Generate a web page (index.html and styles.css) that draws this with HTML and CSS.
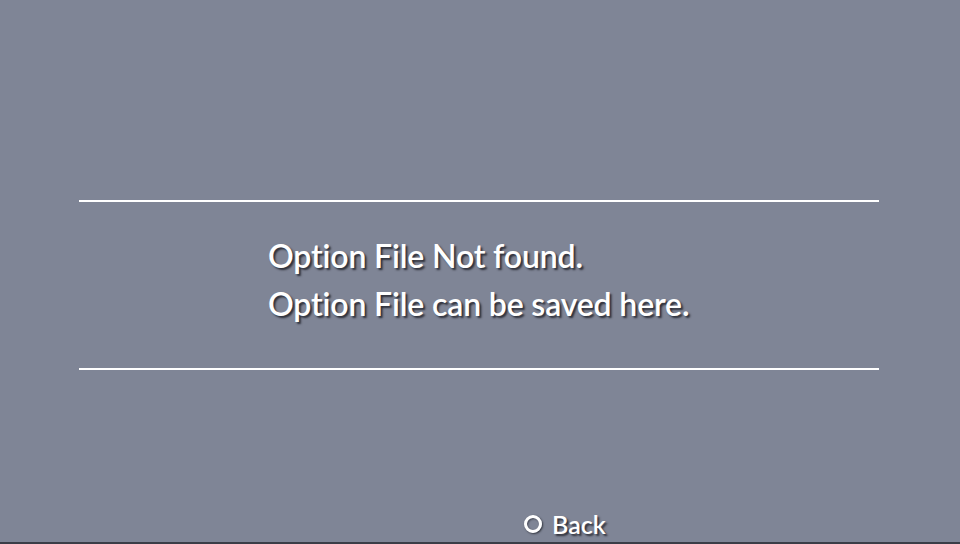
FILE: index.html
```html
<!DOCTYPE html>
<html>
<head>
<meta charset="utf-8">
<link rel="stylesheet" href="styles.css">
</head>
<body>
<div class="screen">
  <div class="panel">
    <div class="rule"></div>
    <div class="message">
      <p class="line">Option File Not found.</p>
      <p class="line">Option File can be saved here.</p>
    </div>
    <div class="rule"></div>
  </div>
  <div class="footer">
    <span class="btn-circle"></span>
    <span class="btn-label">Back</span>
  </div>
</div>
</body>
</html>
```
FILE: styles.css
```css
html, body {
  margin: 0;
  padding: 0;
}
body {
  background: #7f8596;
  font-family: "Lato", "Open Sans", sans-serif;
}
.screen {
  width: 960px;
  height: 542px;
  border-bottom: 2px solid #3a3d47;
  display: flex;
  flex-direction: column;
  overflow: hidden;
}
.panel {
  margin-top: 200px;
  padding: 0 81px 0 79px;
  display: flex;
  flex-direction: column;
}
.rule {
  height: 2px;
  background: #ffffff;
}
.message {
  height: 166px;
  padding-left: 189px;
  box-sizing: border-box;
  padding-top: 30px;
}
.line {
  margin: 0;
  color: #ffffff;
  font-size: 32px;
  font-weight: 600;
  line-height: 48px;
  letter-spacing: -0.15px;
  text-shadow: 2px 2px 2px rgba(30, 32, 40, 0.85);
}
.footer {
  margin-top: auto;
  display: flex;
  align-items: center;
  gap: 10px;
  padding-left: 524px;
  height: 36px;
}
.btn-circle {
  width: 12px;
  height: 12px;
  border: 3px solid #ffffff;
  border-radius: 50%;
  box-shadow: 1px 1px 2px rgba(30, 32, 40, 0.8), inset 1px 1px 2px rgba(30, 32, 40, 0.6);
}
.btn-label {
  color: #ffffff;
  font-size: 25px;
  font-weight: 600;
  letter-spacing: 0;
  text-shadow: 2px 2px 2px rgba(30, 32, 40, 0.85);
}
```
